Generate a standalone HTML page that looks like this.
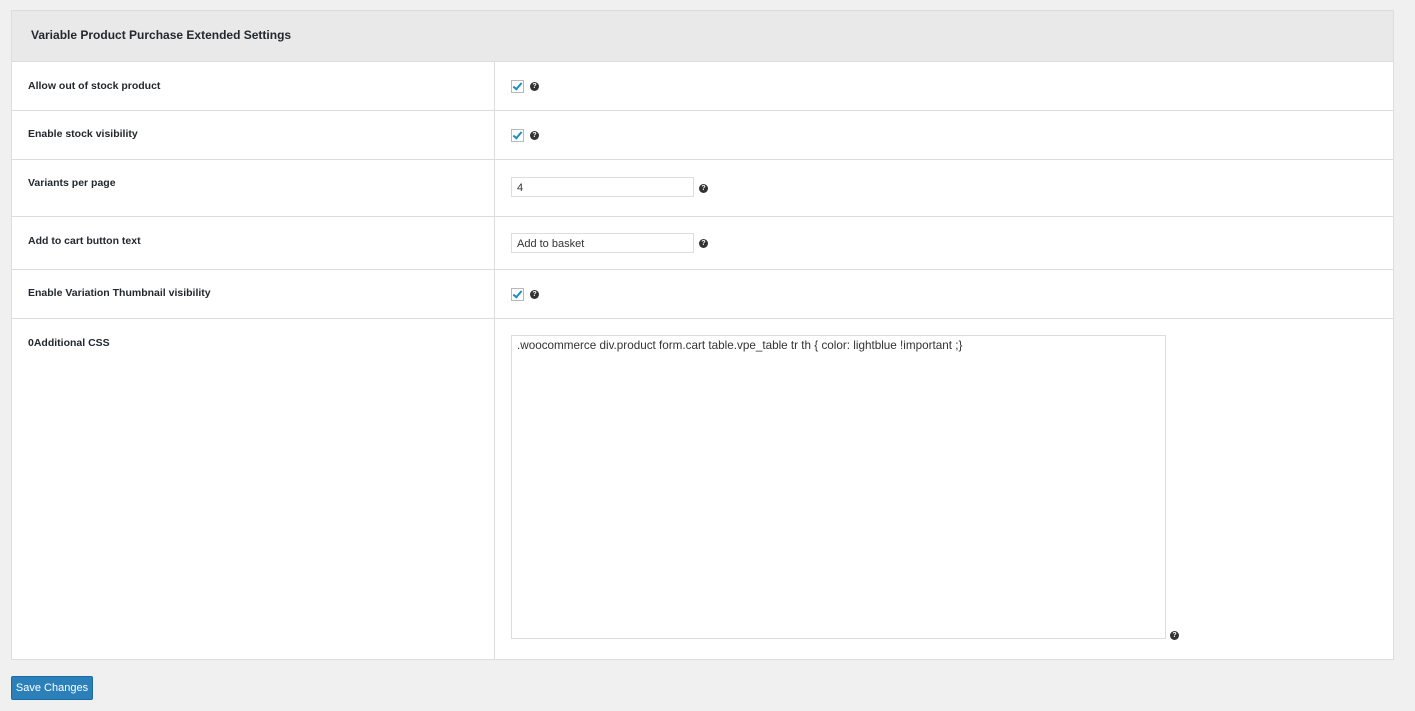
<!DOCTYPE html>
<html><head><style>
body{margin:0;width:1415px;height:711px;background:#f0f0f0;font-family:"Liberation Sans",sans-serif;position:relative;overflow:hidden}
.box{position:absolute;left:11px;top:10px;width:1381px;height:648px;border:1px solid #ddd;background:#fff}
.hd{position:absolute;left:0;top:0;width:1381px;height:50px;background:#e9e9e9;border-bottom:1px solid #ddd}
.hd span{position:absolute;left:19px;top:17px;font-size:12px;font-weight:bold;color:#23282d}
.row{position:absolute;left:0;width:1381px;border-bottom:1px solid #ddd}
.lbl{position:absolute;left:16px;font-size:10.5px;font-weight:bold;color:#23282d}
.vd{position:absolute;left:482px;top:51px;width:1px;height:597px;background:#ddd}
.cb{position:absolute;left:499px;width:11px;height:11px;border:1px solid #b4b9be;background:#fff}
.cb:after{content:"";position:absolute;left:3px;top:0px;width:3px;height:7px;border:solid #1e8cbe;border-width:0 2px 2px 0;transform:rotate(40deg)}
.q{position:absolute;width:9px;height:9px;border-radius:50%;background:#333;color:#fff;font-size:7px;font-weight:bold;text-align:center;line-height:9px}
.in{position:absolute;left:499px;height:20px;border:1px solid #ddd;font-size:11px;color:#333;line-height:20px;padding-left:5px;box-sizing:border-box;width:183px}
.ta{position:absolute;left:499px;top:324px;width:655px;height:304px;border:1px solid #ddd;font-size:11.7px;color:#333;padding:3px 5px;box-sizing:border-box}
.btn{position:absolute;left:11px;top:676px;width:80px;height:22px;background:#2b80b9;border:1px solid #1f6a9d;border-radius:2px;color:#fff;font-size:11px;text-align:center;line-height:22px}
</style></head><body>
<div class="box">
<div class="hd"><span>Variable Product Purchase Extended Settings</span></div>
<div class="row" style="top:51px;height:48px"><span class="lbl" style="top:18px">Allow out of stock product</span></div>
<div class="row" style="top:100px;height:48px"><span class="lbl" style="top:17px">Enable stock visibility</span></div>
<div class="row" style="top:149px;height:56px"><span class="lbl" style="top:17px">Variants per page</span></div>
<div class="row" style="top:206px;height:52px"><span class="lbl" style="top:18px">Add to cart button text</span></div>
<div class="row" style="top:259px;height:48px"><span class="lbl" style="top:17px">Enable Variation Thumbnail visibility</span></div>
<div class="row" style="top:308px;height:340px;border:0"><span class="lbl" style="top:18px">0Additional CSS</span></div>
<div class="vd"></div>
<div class="cb" style="top:69px"></div><div class="q" style="left:518px;top:71px">?</div>
<div class="cb" style="top:118px"></div><div class="q" style="left:518px;top:120px">?</div>
<div class="in" style="top:166px">4</div><div class="q" style="left:687px;top:173px">?</div>
<div class="in" style="top:222px">Add to basket</div><div class="q" style="left:687px;top:228px">?</div>
<div class="cb" style="top:277px"></div><div class="q" style="left:518px;top:279px">?</div>
<div class="ta">.woocommerce div.product form.cart table.vpe_table tr th { color: lightblue !important ;}</div>
<div class="q" style="left:1158px;top:620px">?</div>
</div>
<div class="btn">Save Changes</div>
</body></html>
